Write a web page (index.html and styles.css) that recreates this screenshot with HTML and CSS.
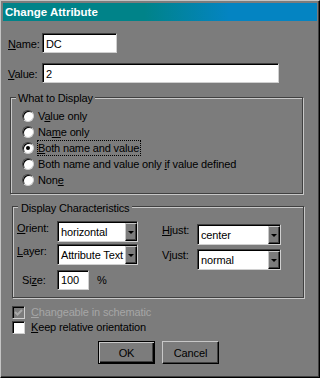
FILE: index.html
```html
<!DOCTYPE html>
<html lang="en">
  <head>
    <meta charset="UTF-8" />
    <title>Change Attribute</title>
    <link rel="stylesheet" href="styles.css">
  </head>
  <body>
    <div class="window">
      <div class="titlebar">Change Attribute</div>
      <div class="dialog">
        <div class="editRow">
          <span class="editLbl"><u>N</u>ame:</span>
          <span class="edit nameEdit">DC</span>
        </div>
        <div class="editRow">
          <span class="editLbl"><u>V</u>alue:</span>
          <span class="edit valueEdit">2</span>
        </div>

        <div class="group displayGroup">
          <span class="groupTitle">What to Display</span>
          <div class="radioList">
            <div class="radioRow"><span class="radio"></span><span class="radioText">V<u>a</u>lue only</span></div>
            <div class="radioRow"><span class="radio"></span><span class="radioText">Na<u>m</u>e only</span></div>
            <div class="radioRow"><span class="radio checked"></span><span class="radioText focused"><u>B</u>oth name and value</span></div>
            <div class="radioRow"><span class="radio"></span><span class="radioText">Both name and value only <u>i</u>f value defined</span></div>
            <div class="radioRow"><span class="radio"></span><span class="radioText">Non<u>e</u></span></div>
          </div>
        </div>

        <div class="group charsGroup">
          <span class="groupTitle">Display Characteristics</span>
          <div class="charsCols">
            <div class="colLeft">
              <div class="optRow">
                <span class="optLbl"><u>O</u>rient:</span>
                <div class="combo comboLeft"><span class="comboText">horizontal</span><span class="comboBtn"><span class="arrow"></span></span></div>
              </div>
              <div class="optRow layerRow">
                <span class="optLbl"><u>L</u>ayer:</span>
                <div class="combo comboLeft"><span class="comboText">Attribute Text</span><span class="comboBtn"><span class="arrow"></span></span></div>
              </div>
              <div class="sizeRow">
                <span class="optLbl sizeLbl">Si<u>z</u>e:</span>
                <span class="edit sizeEdit">100</span>
                <span class="pct">%</span>
              </div>
            </div>
            <div class="colRight">
              <div class="optRow">
                <span class="optLbl rightLbl"><u>H</u>just:</span>
                <div class="combo comboRight"><span class="comboText">center</span><span class="comboBtn"><span class="arrow"></span></span></div>
              </div>
              <div class="optRow vjustRow">
                <span class="optLbl rightLbl">Vjust:</span>
                <div class="combo comboRight"><span class="comboText">normal</span><span class="comboBtn"><span class="arrow"></span></span></div>
              </div>
            </div>
          </div>
        </div>

        <div class="checks">
          <div class="checkRow disabled">
            <span class="checkbox grayed">
              <svg width="9" height="9" viewBox="0 0 9 9"><path d="M1 4 L3.5 6.5 L8 2" fill="none" stroke="#a9a9a9" stroke-width="2"/></svg>
            </span>
            <span class="checkText"><u>C</u>hangeable in schematic</span>
          </div>
          <div class="checkRow">
            <span class="checkbox"></span>
            <span class="checkText"><u>K</u>eep relative orientation</span>
          </div>
        </div>

        <div class="buttons">
          <button class="btn btnDefault">OK</button>
          <button class="btn">Cancel</button>
        </div>
      </div>
    </div>
  </body>
</html>
```

FILE: styles.css
```css
* {
  margin: 0;
  padding: 0;
  box-sizing: border-box;
}
body {
  background-color: #7c7c7c;
  font-family: "Liberation Sans", Arial, sans-serif;
  font-size: 11px;
  letter-spacing: -0.15px;
  color: #000;
}
u {
  text-decoration-thickness: 1px;
}
.window {
  width: 320px;
  height: 378px;
  background-color: #7c7c7c;
  border: 1px solid;
  border-color: #c4c4c4 #000 #000 #c4c4c4;
  box-shadow: inset -1px -1px 0 #404040;
  padding: 2px;
}
.titlebar {
  height: 18px;
  padding-left: 2px;
  background: linear-gradient(to right, #008389 0%, #008389 45%, #0484c2 72%, #0484c2 100%);
  color: #fff;
  font-weight: bold;
  font-size: 11.5px;
  letter-spacing: 0;
  line-height: 18px;
}
.dialog {
  padding: 12px 0 0 5px;
}

/* sunken edit boxes */
.editRow {
  display: flex;
  align-items: baseline;
}
.editRow + .editRow {
  margin-top: 10px;
}
.editLbl {
  width: 34px;
}
.edit {
  display: block;
  height: 20px;
  background-color: #fff;
  border: 1px solid;
  border-color: #404040 #d0d0d0 #d0d0d0 #404040;
  box-shadow: inset 1px 1px 0 #000;
  padding: 4px 0 0 3px;
  line-height: 13px;
  white-space: nowrap;
}
.nameEdit {
  width: 75px;
}
.valueEdit {
  width: 237px;
}

/* etched group boxes */
.group {
  border: 1px solid #404040;
  box-shadow: inset 1px 1px 0 #c8c8c8, 1px 1px 0 #c8c8c8;
}
.groupTitle {
  display: table;
  background-color: #7c7c7c;
  line-height: 14px;
}
.displayGroup {
  width: 293px;
  margin: 14px 0 0 2px;
  padding: 0 0 5px 11px;
}
.displayGroup .groupTitle {
  margin: -7px 0 0 -6px;
  padding: 0 2px;
}
.radioList {
  margin-top: 3px;
}
.radioRow {
  height: 16px;
  display: flex;
  align-items: center;
}
.radio {
  width: 12px;
  height: 12px;
  border-radius: 50%;
  background-color: #fff;
  border: 1px solid;
  border-color: #404040 #d0d0d0 #d0d0d0 #404040;
  box-shadow: inset 1px 1px 0 #000;
  display: flex;
  align-items: center;
  justify-content: center;
}
.radio.checked::after {
  content: "";
  width: 4px;
  height: 4px;
  border-radius: 50%;
  background-color: #000;
}
.radioText {
  margin-left: 3px;
  border: 1px solid transparent;
  padding-right: 1px;
  line-height: 14px;
}
.radioText.focused {
  border: 1px dotted #000;
}

.charsGroup {
  width: 292px;
  margin: 12px 0 0 4px;
  padding: 0 0 7px 4px;
}
.charsGroup .groupTitle {
  margin: -6px 0 0 1px;
  padding: 0 3px;
}
.charsCols {
  display: flex;
  margin-top: 6px;
}
.colLeft {
  width: 121px;
}
.colRight {
  margin-left: 24px;
  padding-top: 3px;
}
.optRow {
  display: flex;
  align-items: flex-start;
}
.layerRow {
  margin-top: 2px;
}
.vjustRow {
  margin-top: 4px;
}
.optLbl {
  width: 40px;
  line-height: 15px;
}
.rightLbl {
  width: 35px;
  line-height: 13px;
}
.combo {
  height: 21px;
  display: flex;
  background-color: #fff;
  border: 1px solid;
  border-color: #404040 #d0d0d0 #d0d0d0 #404040;
  box-shadow: inset 1px 1px 0 #000;
  padding: 1px 0 0 1px;
}
.comboLeft {
  width: 81px;
}
.comboRight {
  width: 84px;
}
.comboText {
  flex: 1;
  overflow: hidden;
  white-space: nowrap;
  line-height: 18px;
  padding-left: 2px;
}
.comboBtn {
  width: 12px;
  height: 18px;
  background-color: #7c7c7c;
  border: 1px solid;
  border-color: #c8c8c8 #000 #000 #c8c8c8;
  box-shadow: inset -1px -1px 0 #404040;
  display: flex;
  align-items: center;
  justify-content: center;
}
.arrow {
  width: 0;
  height: 0;
  border-left: 3px solid transparent;
  border-right: 3px solid transparent;
  border-top: 3px solid #000;
  margin-top: 1px;
}
.sizeRow {
  display: flex;
  align-items: baseline;
  margin-top: 5px;
}
.sizeLbl {
  padding-left: 5px;
}
.sizeEdit {
  width: 32px;
  padding-top: 3px;
}
.pct {
  margin-left: 8px;
}

/* check boxes */
.checks {
  margin: 7px 0 0 4px;
}
.checkRow {
  height: 15px;
  display: flex;
  align-items: center;
}
.checkbox {
  width: 13px;
  height: 13px;
  background-color: #fff;
  border: 1px solid;
  border-color: #404040 #d0d0d0 #d0d0d0 #404040;
  box-shadow: inset 1px 1px 0 #000;
  display: flex;
  align-items: center;
  justify-content: center;
}
.checkbox.grayed {
  background-color: #7c7c7c;
}
.checkText {
  margin-left: 6px;
  line-height: 15px;
}
.disabled .checkText {
  color: #a6a6a6;
}

/* push buttons */
.buttons {
  display: flex;
  gap: 7px;
  margin-top: 6px;
  padding-left: 90px;
}
.btn {
  width: 57px;
  height: 23px;
  background-color: #7c7c7c;
  font-family: "Liberation Sans", Arial, sans-serif;
  font-size: 11px;
  letter-spacing: -0.15px;
  color: #000;
  border: 1px solid;
  border-color: #c8c8c8 #000 #000 #c8c8c8;
  box-shadow: inset -1px -1px 0 #404040;
  cursor: pointer;
}
.btnDefault {
  border-color: #000;
  box-shadow: inset 1px 1px 0 #c8c8c8, inset -1px -1px 0 #000, inset -2px -2px 0 #404040;
}
```
